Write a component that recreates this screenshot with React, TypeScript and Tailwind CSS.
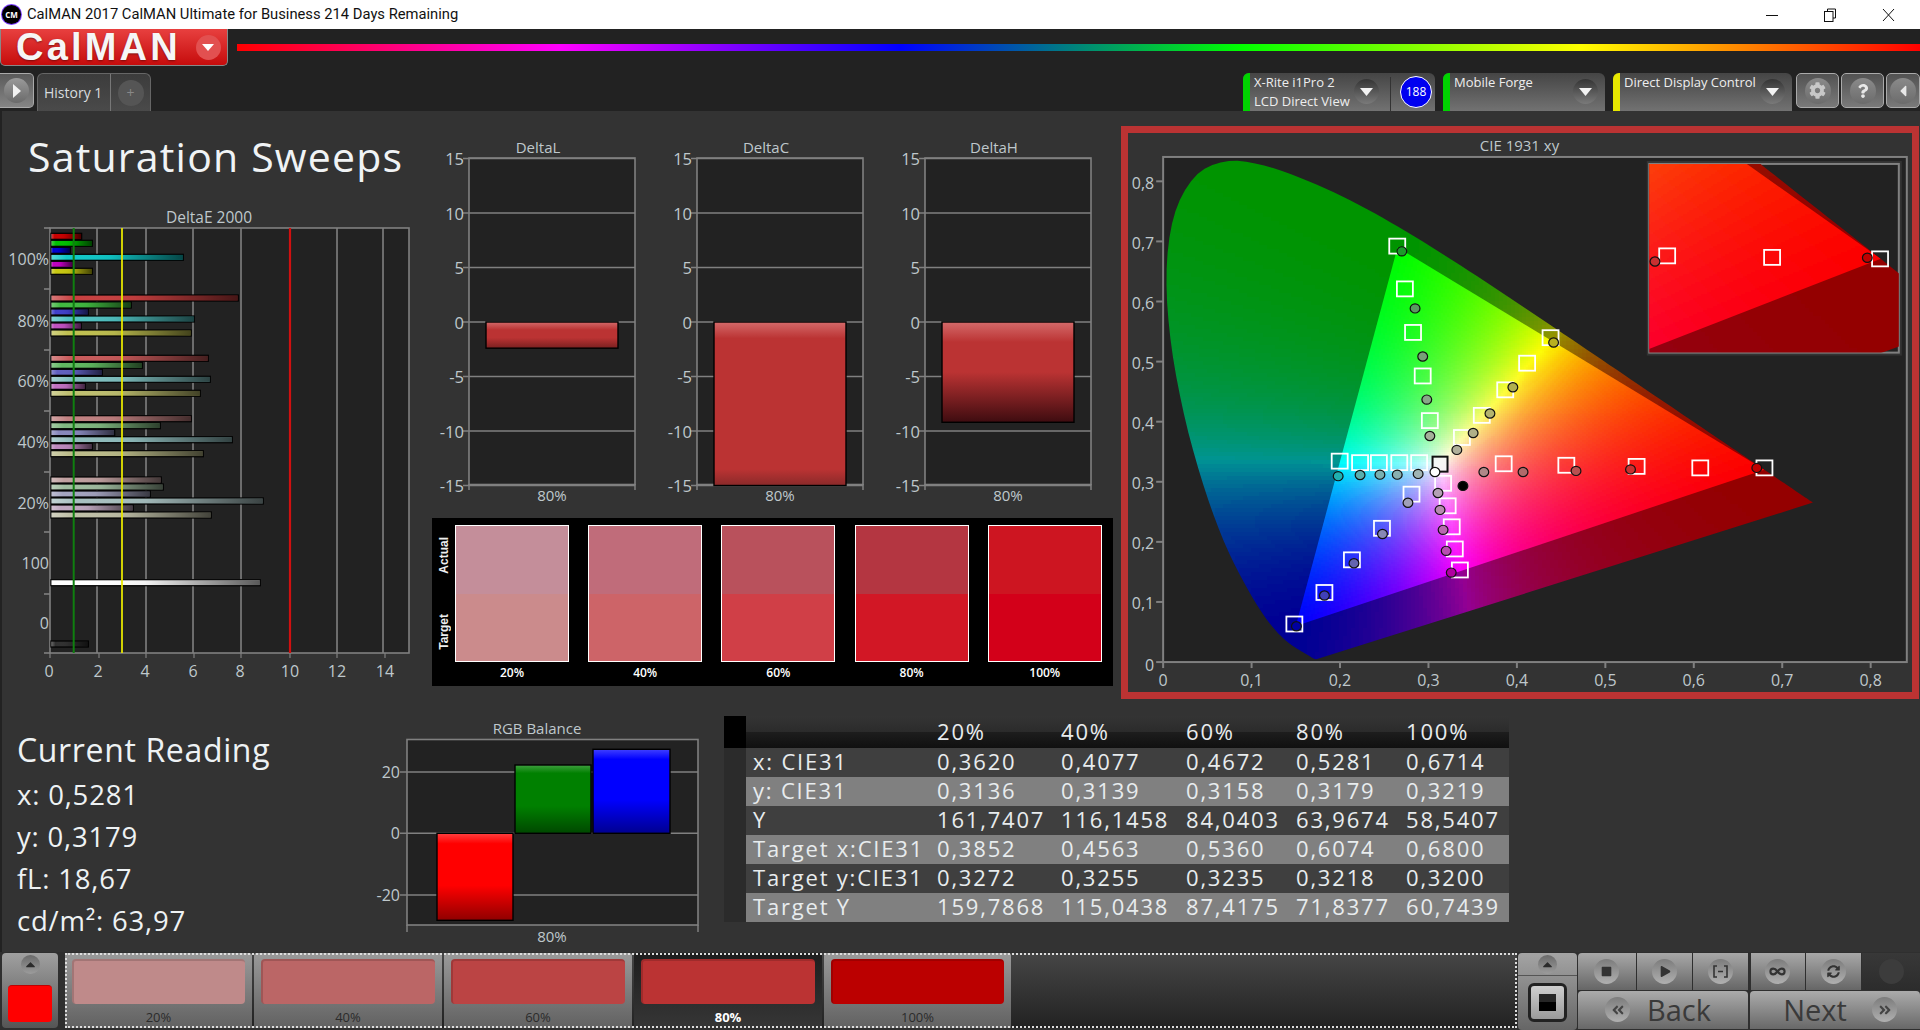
import { useMemo } from "react";
import { FaAngleDoubleLeft, FaAngleDoubleRight, FaCaretLeft, FaCaretUp, FaCog, FaPlay, FaQuestion, FaStop, FaSyncAlt } from "react-icons/fa";
import { LuInfinity } from "react-icons/lu";

// CIE 1931 spectral locus, 380nm to 700nm
const LOCUS: [number, number][] = [
  [0.1741, 0.005], [0.174, 0.005], [0.1738, 0.0049], [0.1736, 0.0049], [0.1733, 0.0048], [0.173, 0.0048],
  [0.1726, 0.0048], [0.1721, 0.0048], [0.1714, 0.0051], [0.1703, 0.0058], [0.1689, 0.0069], [0.1669, 0.0086],
  [0.1644, 0.0109], [0.1611, 0.0138], [0.1566, 0.0177], [0.151, 0.0227], [0.144, 0.0297], [0.1355, 0.0399],
  [0.1241, 0.0578], [0.1096, 0.0868], [0.0913, 0.1327], [0.0687, 0.2007], [0.0454, 0.295], [0.0235, 0.4127],
  [0.0082, 0.5384], [0.0039, 0.6548], [0.0139, 0.7502], [0.0389, 0.812], [0.0743, 0.8338], [0.1142, 0.8262],
  [0.1547, 0.8059], [0.1929, 0.7816], [0.2296, 0.7543], [0.2658, 0.7243], [0.3016, 0.6923], [0.3373, 0.6589],
  [0.3731, 0.6245], [0.4087, 0.5896], [0.4441, 0.5547], [0.4788, 0.5202], [0.5125, 0.4866], [0.5448, 0.4544],
  [0.5752, 0.4242], [0.6029, 0.3965], [0.627, 0.3725], [0.6482, 0.3514], [0.6658, 0.334], [0.6801, 0.3197],
  [0.6915, 0.3083], [0.7006, 0.2993], [0.7079, 0.292], [0.714, 0.2859], [0.7219, 0.278], [0.726, 0.274], [0.7347, 0.2653],
];
const P3: [number, number][] = [[0.68, 0.32], [0.265, 0.69], [0.15, 0.06]];

// catmull-rom through the 5nm samples, the raw polygon shows kinks at this size
const LOCUS_SMOOTH: [number, number][] = LOCUS.flatMap((p1, i) => {
  const n = LOCUS.length - 1;
  const p0 = LOCUS[Math.max(i - 1, 0)];
  const p2 = LOCUS[Math.min(i + 1, n)];
  const p3 = LOCUS[Math.min(i + 2, n)];
  return [0, 0.25, 0.5, 0.75].map((t): [number, number] => {
    const f = (a: number, b: number, c: number, d: number) =>
      0.5 * (2 * b + (c - a) * t + (2 * a - 5 * b + 4 * c - d) * t * t + (3 * b - a - 3 * c + d) * t * t * t);
    return [f(p0[0], p1[0], p2[0], p3[0]), f(p0[1], p1[1], p2[1], p3[1])];
  });
});

function toRgb(x: number, y: number) {
  const X = x / y;
  const Z = (1 - x - y) / y;
  return [
    2.4935 * X - 0.9314 - 0.4027 * Z,
    -0.8295 * X + 1.7627 + 0.0236 * Z,
    0.0358 * X - 0.0762 + 0.9569 * Z,
  ];
}

function shade(rgb: number[], k: number, curve: number) {
  const c = rgb.map((v) => Math.max(v, 0));
  const m = Math.max(...c, 0.0001);
  const [r, g, b] = c.map((v) => Math.round(Math.pow(v / m, curve) * k * 255) & ~3);
  return `rgb(${r},${g},${b})`;
}

type View = { w: number; h: number; x0: number; y0: number; sx: number; sy: number };

function buildMesh(v: View, step: number, inner: boolean) {
  const byColor = new Map<string, string[]>();
  for (let row = 0; row < v.h; row += step) {
    for (let col = 0; col < v.w; col += step) {
      const x = v.x0 + (col + step / 2) / v.sx;
      const y = v.y0 - (row + step / 2) / v.sy;
      if (y < 0.002) continue;
      const rgb = toRgb(x, y);
      if (inner && Math.min(...rgb) < -0.12) continue;
      const color = inner ? shade(rgb, 1, 1.15) : shade(rgb, 0.58, 1.4);
      const list = byColor.get(color) ?? [];
      list.push(`M${col} ${row}h${step}v${step}h-${step}z`);
      byColor.set(color, list);
    }
  }
  return [...byColor.entries()].map(([color, d]) => ({ color, d: d.join("") }));
}

function Gamut({ id, view, outerStep, innerStep }: { id: string; view: View; outerStep: number; innerStep: number }) {
  const outer = useMemo(() => buildMesh(view, outerStep, false), [view, outerStep]);
  const inner = useMemo(() => buildMesh(view, innerStep, true), [view, innerStep]);
  const pts = (list: [number, number][]) =>
    list.map(([x, y]) => `${(x - view.x0) * view.sx},${(view.y0 - y) * view.sy}`).join(" ");
  return (
    <>
      <defs>
        <clipPath id={`${id}-locus`}>
          <polygon points={pts([...LOCUS_SMOOTH, LOCUS[LOCUS.length - 1]])} />
        </clipPath>
        <clipPath id={`${id}-tri`}>
          <polygon points={pts(P3)} />
        </clipPath>
      </defs>
      <g clipPath={`url(#${id}-locus)`}>
        {outer.map((p) => (
          <path key={p.color} d={p.d} fill={p.color} shapeRendering="crispEdges" />
        ))}
        <g clipPath={`url(#${id}-tri)`}>
          {inner.map((p) => (
            <path key={p.color} d={p.d} fill={p.color} shapeRendering="crispEdges" />
          ))}
        </g>
      </g>
    </>
  );
}

const MAIN_VIEW: View = { w: 745, h: 506, x0: 0, y0: 0.8405, sx: 886, sy: 602 };
const INSET_VIEW: View = { w: 250, h: 189, x0: 0.524, y0: 0.4005, sx: 1487, sy: 1180 };

// marker places read off the reference, in crop units
const fx = (n: number) => 1120 + n / 1.96;
const fy = (n: number) => 120 + n / 2.66;

const SQUARES: [number, number][] = [
  [542, 336], [557, 450], [573, 566], [592, 682], [606, 801],
  [843, 580], [797, 648], [754, 719], [708, 787], [669, 846],
  [429, 909], [469, 913], [506, 913], [546, 913], [585, 913],
  [1263, 927], [1137, 927], [1012, 923], [874, 920], [751, 916],
  [340, 1343], [399, 1259], [453, 1172], [512, 1088], [570, 997],
  [665, 1199], [655, 1143], [649, 1084], [641, 1028], [632, 968],
];
const DOTS: [number, number, string][] = [
  [1248, 927, "#c00000"], [1000, 931, "#c83030"], [893, 935, "#b85050"], [789, 938, "#b06a6a"], [712, 938, "#b08888"],
  [551, 350, "#1c9a2a"], [577, 502, "#5a9a60"], [592, 630, "#78a078"], [600, 745, "#88a888"], [606, 842, "#a4b09a"],
  [344, 1349, "#0000a0"], [399, 1267, "#4040b8"], [457, 1181, "#6464b0"], [513, 1103, "#8888b4"], [563, 1020, "#a0a0b8"],
  [849, 593, "#b8b020"], [769, 712, "#b0b050"], [724, 782, "#b4b46e"], [691, 834, "#b0b088"], [659, 879, "#b0b09a"],
  [426, 949, "#20b0b0"], [469, 946, "#58aeae"], [508, 945, "#78b0b0"], [542, 945, "#88b0b0"], [583, 943, "#a0b4b4"],
  [648, 1206, "#b000a0"], [638, 1148, "#b84eb0"], [632, 1092, "#b868b0"], [626, 1039, "#b88ab0"], [622, 994, "#b4a0b4"],
  [616, 938, "#ffffff"], [671, 975, "#000000"],
];
const INSET_SQUARES: [number, number][] = [[1490, 370], [1278, 366], [1072, 362]];
const INSET_DOTS: [number, number, string][] = [[1465, 367, "#c00000"], [1048, 377, "#c83030"]];

function Square({ x, y, stroke = "#fff" }: { x: number; y: number; stroke?: string }) {
  return <rect x={x - 8} y={y - 7.5} width={16} height={15} fill="none" stroke={stroke} strokeWidth={1.8} />;
}

function Dot({ x, y, fill }: { x: number; y: number; fill: string }) {
  return <ellipse cx={x} cy={y} rx={4.9} ry={4.6} fill={fill} stroke="#111" strokeWidth={1.2} />;
}

function Label({ x, y, anchor = "middle", children, size = 16 }: { x: number; y: number; anchor?: "start" | "middle" | "end"; children: React.ReactNode; size?: number }) {
  return (
    <text x={x} y={y} textAnchor={anchor} dominantBaseline="central" fill="#bfc8cc" fontSize={size}>
      {children}
    </text>
  );
}

function CieChart() {
  const xs = ["0", "0,1", "0,2", "0,3", "0,4", "0,5", "0,6", "0,7", "0,8"];
  const ys = ["0", "0,1", "0,2", "0,3", "0,4", "0,5", "0,6", "0,7", "0,8"];
  return (
    <svg viewBox="1128 133 783 560" className="block w-[784px] h-[559px]">
      <Label x={1519} y={145} size={15}>CIE 1931 xy</Label>
      <rect x={1162} y={157} width={745} height={506} fill="#222" stroke="#808080" strokeWidth={2} />
      <svg x={1162} y={157} width={745} height={506} viewBox="0 0 745 506">
        <Gamut id="main" view={MAIN_VIEW} outerStep={4} innerStep={2} />
      </svg>
      {xs.map((t, i) => (
        <g key={t}>
          <line x1={1162 + i * 88.6} x2={1162 + i * 88.6} y1={663} y2={669} stroke="#808080" strokeWidth={2} />
          <Label x={1162 + i * 88.6} y={680.5}>{t}</Label>
        </g>
      ))}
      {ys.map((t, i) => (
        <g key={t}>
          <line x1={1155} x2={1162} y1={663 - i * 60.2} y2={663 - i * 60.2} stroke="#808080" strokeWidth={2} />
          <Label x={1153} y={i === 0 ? 665.5 : 664.5 - i * 60.2} anchor="end">{t}</Label>
        </g>
      ))}
      <rect x={1646.5} y={161} width={255.5} height={195} fill="#333" />
      <rect x={1649} y={164} width={250} height={189} fill="#222" stroke="#808080" strokeWidth={2} />
      <svg x={1649} y={164} width={250} height={189} viewBox="0 0 250 189">
        <Gamut id="inset" view={INSET_VIEW} outerStep={4} innerStep={2} />
      </svg>
      {SQUARES.map(([x, y]) => (
        <Square key={`${x}-${y}`} x={fx(x)} y={fy(y)} />
      ))}
      <rect x={fx(626) - 7.5} y={fy(917) - 7.5} width={15} height={15} fill="#f4f4f4" fillOpacity={0.85} stroke="#111" strokeWidth={2} />
      {DOTS.map(([x, y, c]) => (
        <Dot key={`${x}-${y}`} x={fx(x)} y={fy(y)} fill={c} />
      ))}
      {INSET_SQUARES.map(([x, y]) => (
        <Square key={`${x}-${y}`} x={fx(x)} y={fy(y)} />
      ))}
      {INSET_DOTS.map(([x, y, c]) => (
        <Dot key={`${x}-${y}`} x={fx(x)} y={fy(y)} fill={c} />
      ))}
    </svg>
  );
}

const DE_ROWS = [
  { y: 236.3, ends: [245, 277, 211, 550, 219, 277], colors: ["#c80000", "#00c000", "#0000d0", "#10c8c8", "#c000c0", "#c8c810"] },
  { y: 298, ends: [715, 394, 265, 583, 244, 574], colors: ["#c84040", "#40b840", "#4040c8", "#50c0c0", "#c050c0", "#c0c050"] },
  { y: 358.3, ends: [625, 427, 307, 631, 256, 601], colors: ["#c85a5a", "#60b860", "#6060c0", "#80c0c0", "#c070c0", "#c0c070"] },
  { y: 418.7, ends: [574, 481, 344, 697, 277, 610], colors: ["#c08080", "#80b880", "#8888bc", "#90bcbc", "#bc88bc", "#bcbc8a"] },
  { y: 480, ends: [484, 490, 451, 790, 400, 634], colors: ["#c0a0a0", "#a0bca0", "#a4a4c0", "#a8c0c0", "#c0a8c0", "#c0c0a8"] },
];

function DeltaEBar({ y, end, color }: { y: number; end: number; color: string }) {
  return (
    <g>
      <rect x={51} y={y - 3} width={end / 3 - 51} height={6} fill={color} stroke="#000" strokeWidth={1.2} />
      <rect x={51} y={y - 2.4} width={end / 3 - 51.5} height={4.8} fill="url(#de-fade)" />
    </g>
  );
}

function DeltaEChart() {
  const grid = [97, 146, 193, 241, 337, 383];
  const ticks = [228, 289, 350, 411, 472, 532, 594, 653];
  const labels: [string, number][] = [["100%", 258.7], ["80%", 320.7], ["60%", 381], ["40%", 441.7], ["20%", 502.7], ["100", 563], ["0", 623]];
  const xLabels: [string, number][] = [["0", 49], ["2", 98], ["4", 145], ["6", 193], ["8", 240], ["10", 289], ["12", 336], ["14", 384]];
  return (
    <svg viewBox="2 205 430 485" className="block w-[430px] h-[485px]">
      <defs>
        <linearGradient id="de-fade">
          <stop offset="0" stopColor="#fff" stopOpacity={0.3} />
          <stop offset="0.12" stopColor="#fff" stopOpacity={0} />
          <stop offset="0.45" stopColor="#000" stopOpacity={0.05} />
          <stop offset="1" stopColor="#000" stopOpacity={0.65} />
        </linearGradient>
      </defs>
      <Label x={209} y={217} size={15.5}>DeltaE 2000</Label>
      <rect x={50} y={228} width={359} height={425} fill="#222" stroke="#808080" strokeWidth={1.6} />
      {grid.map((x) => (
        <line key={x} x1={x} x2={x} y1={228} y2={653} stroke="#808080" strokeWidth={1.6} />
      ))}
      {ticks.map((y) => (
        <line key={y} x1={44} x2={50} y1={y} y2={y} stroke="#808080" strokeWidth={1.6} />
      ))}
      {DE_ROWS.map((row) =>
        row.ends.map((end, i) => <DeltaEBar key={`${row.y}-${i}`} y={row.y + i * 7} end={end} color={row.colors[i]} />),
      )}
      <DeltaEBar y={582.7} end={781} color="#ffffff" />
      <DeltaEBar y={644} end={265} color="#303030" />
      <line x1={73.7} x2={73.7} y1={228} y2={653} stroke="#0f7f0f" strokeWidth={2} />
      <line x1={122} x2={122} y1={228} y2={653} stroke="#e6e600" strokeWidth={1.8} />
      <line x1={290} x2={290} y1={228} y2={653} stroke="#d01010" strokeWidth={2.2} />
      {labels.map(([t, y]) => (
        <Label key={t + y} x={49} y={y} anchor="end">{t}</Label>
      ))}
      {xLabels.map(([t, x]) => (
        <g key={t}>
          <line x1={x + 1} x2={x + 1} y1={653} y2={658} stroke="#808080" strokeWidth={1.2} />
          <Label x={x + (t.length > 1 ? 1 : 0)} y={671}>{t}</Label>
        </g>
      ))}
    </svg>
  );
}

function DeltaChart({ title, value, stops, id }: { title: string; value: number; stops: [number, string][]; id: string }) {
  const ticks = [15, 10, 5, 0, -5, -10, -15];
  const yOf = (v: number) => 322 - v * 10.9;
  return (
    <svg viewBox="0 135 228 372" className="block w-[228px] h-[372px]">
      <defs>
        <linearGradient id={id} x1="0" x2="0" y1="0" y2="1">
          {stops.map(([o, c]) => (
            <stop key={o} offset={o} stopColor={c} />
          ))}
        </linearGradient>
      </defs>
      <Label x={106} y={147} size={15}>{title}</Label>
      <rect x={37} y={158} width={166} height={326.5} fill="#222" stroke="#808080" strokeWidth={1.6} />
      {ticks.map((t) => (
        <g key={t}>
          <line x1={31} x2={203} y1={yOf(t)} y2={yOf(t)} stroke="#808080" strokeWidth={1.5} />
          <Label x={32} y={yOf(t)} anchor="end" size={16.5}>{t}</Label>
        </g>
      ))}
      <rect x={54} y={322} width={132} height={yOf(value) - 322} fill={`url(#${id})`} stroke="#000" strokeWidth={1.4} />
      <line x1={37} x2={37} y1={484} y2={490} stroke="#808080" strokeWidth={1.5} />
      <line x1={203} x2={203} y1={484} y2={490} stroke="#808080" strokeWidth={1.5} />
      <Label x={120} y={495} size={15}>80%</Label>
    </svg>
  );
}

function RgbBalance() {
  const bars = [
    { x: 437, w: 76, y: 833.3, h: 87, id: "bal-r", c: ["#ff4040", "#ff0000", "#ff0000", "#900000"] },
    { x: 515, w: 76, y: 765, h: 68.3, id: "bal-g", c: ["#40a040", "#008000", "#008000", "#004800"] },
    { x: 593, w: 77, y: 749.3, h: 84, id: "bal-b", c: ["#4040ff", "#0000ff", "#0000ff", "#000090"] },
  ];
  return (
    <svg viewBox="340 716 384 230" className="block w-[384px] h-[230px]">
      <defs>
        {bars.map((b) => (
          <linearGradient key={b.id} id={b.id} x1="0" x2="0" y1="0" y2="1">
            <stop offset="0" stopColor={b.c[0]} />
            <stop offset="0.12" stopColor={b.c[1]} />
            <stop offset="0.6" stopColor={b.c[2]} />
            <stop offset="1" stopColor={b.c[3]} />
          </linearGradient>
        ))}
      </defs>
      <Label x={537} y={728} size={15}>RGB Balance</Label>
      <rect x={407} y={739.5} width={291} height={185.5} fill="#222" stroke="#808080" strokeWidth={1.6} />
      {[772, 833.3, 895].map((y, i) => (
        <g key={y}>
          <line x1={400} x2={698} y1={y} y2={y} stroke="#808080" strokeWidth={1.5} />
          <Label x={400} y={y} anchor="end" size={16}>{["20", "0", "-20"][i]}</Label>
        </g>
      ))}
      {bars.map((b) => (
        <rect key={b.id} x={b.x} y={b.y} width={b.w} height={b.h} fill={`url(#${b.id})`} stroke="#000" strokeWidth={1.4} />
      ))}
      <line x1={407} x2={407} y1={925} y2={932} stroke="#808080" strokeWidth={1.5} />
      <line x1={698} x2={698} y1={925} y2={932} stroke="#808080" strokeWidth={1.5} />
      <Label x={552} y={936} size={15}>80%</Label>
    </svg>
  );
}

const SWATCHES = [
  { label: "20%", actual: "bg-[#c48e9a]", target: "bg-[#cb8b8c]" },
  { label: "40%", actual: "bg-[#c06c7a]", target: "bg-[#cd6468]" },
  { label: "60%", actual: "bg-[#b9515c]", target: "bg-[#d03f47]" },
  { label: "80%", actual: "bg-[#b43641]", target: "bg-[#d21725]" },
  { label: "100%", actual: "bg-[#cd1521]", target: "bg-[#d30019]" },
];

function Swatches() {
  return (
    <div className="mt-[11px] flex h-[168px] w-[681px] bg-black pt-[7px]">
      <div className="flex w-[23px] h-[137px] flex-col text-[12px] font-bold text-[#eee] [font-family:'Liberation_Sans',sans-serif]">
        <div className="flex h-1/2 items-center justify-center pb-[8px]">
          <span className="[writing-mode:vertical-rl] rotate-180">Actual</span>
        </div>
        <div className="flex h-1/2 items-center justify-center pt-[8px]">
          <span className="[writing-mode:vertical-rl] rotate-180">Target</span>
        </div>
      </div>
      <div className="flex gap-[19.2px]">
        {SWATCHES.map((s) => (
          <div key={s.label} className="w-[114px]">
            <div className="flex h-[137px] flex-col border border-white">
              <div className={`flex-1 ${s.actual}`} />
              <div className={`flex-1 ${s.target}`} />
            </div>
            <p className="mt-[3px] text-center text-[12px] font-semibold leading-[16px] text-white">{s.label}</p>
          </div>
        ))}
      </div>
    </div>
  );
}

const TABLE_ROWS = [
  ["x: CIE31", "0,3620", "0,4077", "0,4672", "0,5281", "0,6714"],
  ["y: CIE31", "0,3136", "0,3139", "0,3158", "0,3179", "0,3219"],
  ["Y", "161,7407", "116,1458", "84,0403", "63,9674", "58,5407"],
  ["Target x:CIE31", "0,3852", "0,4563", "0,5360", "0,6074", "0,6800"],
  ["Target y:CIE31", "0,3272", "0,3255", "0,3235", "0,3218", "0,3200"],
  ["Target Y", "159,7868", "115,0438", "87,4175", "71,8377", "60,7439"],
];

function ReadingsTable() {
  const cols = "grid grid-cols-[22px_191px_124px_125px_110px_110px_103px] items-center";
  return (
    <div className="mt-[16px] w-[785px] text-[22px] leading-[26px] tracking-[1.8px] text-[#e8ecee]">
      <div className={`${cols} h-[32px] bg-[linear-gradient(#343434_0%,#2b2b2b_50%,#1d1d1d_50%,#101010_100%)]`}>
        <div className="h-full bg-black" />
        <div />
        {["20%", "40%", "60%", "80%", "100%"].map((h) => (
          <div key={h} className="-mt-[2px]">{h}</div>
        ))}
      </div>
      {TABLE_ROWS.map((row, i) => (
        <div key={row[0]} className={`${cols} h-[29px] ${i % 2 === 0 ? "bg-[#3f3f3f]" : "bg-[#808080]"}`}>
          <div className="h-full bg-[#2b2b2b]" />
          <div className="-mt-[4px] pl-[7px] whitespace-nowrap">{row[0]}</div>
          {row.slice(1).map((v, j) => (
            <div key={j} className="-mt-[4px] whitespace-nowrap">{v}</div>
          ))}
        </div>
      ))}
    </div>
  );
}

function CurrentReading() {
  const rows = ["x: 0,5281", "y: 0,3179", "fL: 18,67", "cd/m²: 63,97"];
  return (
    <div className="w-[340px] pl-[17px] pt-[33px] text-[#eef2f4]">
      <h2 className="h-[34px] text-[32px] leading-[34px] tracking-[0.65px] font-normal whitespace-nowrap">Current Reading</h2>
      <div className="mt-[7px]">
        {rows.map((r) => (
          <p key={r} className="h-[42px] text-[27.5px] leading-[42px] tracking-[0.8px]">{r}</p>
        ))}
      </div>
    </div>
  );
}

function DownCircle({ className = "" }: { className?: string }) {
  return (
    <div className={`flex h-[25px] w-[25px] items-center justify-center rounded-full bg-[linear-gradient(#343434,#7a7a7a)] ${className}`}>
      <svg width="13" height="8" viewBox="0 0 13 8"><path d="M0 0h13L6.5 8z" fill="#f2f2f2" /></svg>
    </div>
  );
}

function DeviceBox({ stripe, width, lines, circleRight }: { stripe: string; width: string; lines: string[]; circleRight: string }) {
  return (
    <div className={`relative flex h-[38px] ${width} overflow-hidden rounded-t-[6px] bg-[linear-gradient(#454545,#727272)]`}>
      <div className={`w-[7px] ${stripe}`} />
      <div className="pl-[4px] text-[13px] leading-[19px] text-[#eee] whitespace-nowrap">
        {lines.map((l) => (
          <div key={l}>{l}</div>
        ))}
      </div>
      <DownCircle className={`absolute top-[6px] ${circleRight}`} />
    </div>
  );
}

function SquareBtn({ children, width = "w-[43px]" }: { children: React.ReactNode; width?: string }) {
  return (
    <div className={`flex h-[35px] ${width} items-center justify-center rounded-[5px] border border-[#aaa] bg-[linear-gradient(#525252,#7a7a7a)]`}>
      <div className="flex h-[26px] w-[26px] items-center justify-center rounded-full bg-[linear-gradient(#8a8a8a,#6c6c6c)] text-[#c8c8c8]">
        {children}
      </div>
    </div>
  );
}

function Header() {
  return (
    <header className="h-[82px] bg-[#222]">
      <div className="flex h-[37px] items-center">
        <div className="flex h-[37px] w-[228px] items-center rounded-b-[5px] border-b border-x border-[#888] bg-[linear-gradient(#e8403f,#c60c0c)] pl-[15px]">
          <span className="text-[38px] font-bold leading-none tracking-[3.2px] text-[#f6f6f6] [font-family:'Liberation_Sans',sans-serif] [text-shadow:0_1px_2px_#00000066]">
            CalMAN
          </span>
          <div className="ml-[15px] flex h-[25px] w-[25px] items-center justify-center rounded-full bg-[#e25050]">
            <svg width="12" height="7" viewBox="0 0 12 7"><path d="M0 0h12L6 7z" fill="#fff" /></svg>
          </div>
        </div>
        <div className="ml-[9px] h-[7px] flex-1 bg-[linear-gradient(90deg,#f00_0px,#f0f_323px,#00f_663px,#0f0_1003px,#ff0_1344px,#f00_1683px)]" />
      </div>
      <div className="mt-[7px] flex h-[38px] items-start">
        <div className="flex h-[35px] w-[34px] items-center justify-center rounded-r-[5px] border border-l-0 border-[#aaa] bg-[linear-gradient(#5a5a5a,#858585)]">
          <div className="flex h-[25px] w-[25px] items-center justify-center rounded-full bg-[linear-gradient(#9a9a9a,#6a6a6a)]">
            <svg width="9" height="14" viewBox="0 0 9 14"><path d="M1 0l8 7-8 7z" fill="#f2f2f2" /></svg>
          </div>
        </div>
        <div className="ml-[3px] flex h-[38px] w-[114px] rounded-t-[6px] border-x border-t border-[#666] bg-[linear-gradient(#3c3c3c,#4a4a4a)]">
          <div className="flex w-[72px] items-center pl-[6px] text-[14px] text-[#d8dcdf] whitespace-nowrap">History 1</div>
          <div className="flex flex-1 items-center justify-center border-l border-[#777]">
            <div className="flex h-[26px] w-[26px] items-center justify-center rounded-full bg-[#555] text-[14px] text-[#888]">+</div>
          </div>
        </div>
        <div className="ml-auto flex items-start gap-[8px]">
          <div className="relative">
            <DeviceBox stripe="bg-[#00d400]" width="w-[192px]" lines={["X-Rite i1Pro 2", "LCD Direct View"]} circleRight="right-[56px]" />
            <div className="absolute right-[44px] top-[4px] h-[34px] w-px bg-[#333]" />
            <div className="absolute right-[3px] top-[3px] flex h-[32px] w-[32px] items-center justify-center rounded-full border border-white bg-[#0000f0] text-[12px] text-white">188</div>
          </div>
          <DeviceBox stripe="bg-[#00d400]" width="w-[162px]" lines={["Mobile Forge"]} circleRight="right-[7px]" />
          <DeviceBox stripe="bg-[#e8e800]" width="w-[179px]" lines={["Direct Display Control"]} circleRight="right-[7px]" />
          <div className="-ml-[4px] flex gap-[2px]">
            <SquareBtn><FaCog size={17} /></SquareBtn>
            <SquareBtn><FaQuestion size={14} className="text-[#e8e8e8]" /></SquareBtn>
            <SquareBtn width="w-[34px]"><FaCaretLeft size={18} className="text-[#e8e8e8]" /></SquareBtn>
          </div>
        </div>
      </div>
    </header>
  );
}

function TitleBar() {
  return (
    <div className="flex h-[29px] items-center bg-white text-[14.75px] text-[#111]">
      <div className="ml-[2px] flex h-[19px] w-[19px] items-center justify-center rounded-full bg-black text-[8px] font-bold text-white ring-1 ring-[#7a3cff]">CM</div>
      <span className="ml-[6px] [font-family:Roboto,sans-serif] whitespace-nowrap">CalMAN 2017 CalMAN Ultimate for Business 214 Days Remaining</span>
      <div className="ml-auto flex pr-[3px]">
        <div className="flex h-[29px] w-[58px] items-center justify-center">
          <svg width="12" height="12" viewBox="0 0 12 12"><path d="M0 6.5h12" stroke="#111" /></svg>
        </div>
        <div className="flex h-[29px] w-[58px] items-center justify-center">
          <svg width="12" height="14" viewBox="0 0 12 14" fill="none" stroke="#111"><path d="M3.5 3V1h8v9h-2.5" /><rect x="0.5" y="3.5" width="8.5" height="10" /></svg>
        </div>
        <div className="flex h-[29px] w-[58px] items-center justify-center">
          <svg width="13" height="14" viewBox="0 0 13 14" stroke="#111"><path d="M1 1l11 12M12 1L1 13" /></svg>
        </div>
      </div>
    </div>
  );
}

const SWEEP = [
  { label: "20%", fill: "bg-[#bf8a8a]", width: "w-[187px]" },
  { label: "40%", fill: "bg-[#bb6666]", width: "w-[188px]" },
  { label: "60%", fill: "bg-[#bb4444]", width: "w-[188px]" },
  { label: "80%", fill: "bg-[#bb3333]", width: "w-[188px]", active: true },
  { label: "100%", fill: "bg-[#bb0000]", width: "w-[187px]" },
];

function UpCircle() {
  return (
    <div className="flex h-[19px] w-[19px] items-center justify-center rounded-full bg-[linear-gradient(#6a6a6a,#9c9c9c)] text-[#2b2b2b]">
      <FaCaretUp size={15} />
    </div>
  );
}

function ToolCircle({ children, dark }: { children?: React.ReactNode; dark?: boolean }) {
  return (
    <div className={`flex h-[25px] w-[25px] items-center justify-center rounded-full text-[#333] ${dark ? "bg-[#3c3c3c]" : "bg-[linear-gradient(#7c7c7c,#b0b0b0)]"}`}>
      {children}
    </div>
  );
}

function ToolButton({ width, children, dark }: { width: string; children?: React.ReactNode; dark?: boolean }) {
  return (
    <div className={`flex h-[37px] ${width} items-center justify-center ${dark ? "bg-[linear-gradient(#383838,#2c2c2c)]" : "bg-[linear-gradient(#a8a8a8,#666)]"} first:rounded-tl-[4px]`}>
      {children}
    </div>
  );
}

function BottomBar() {
  return (
    <footer className="flex h-[78px] bg-[#2f2f2f] pt-px">
      <div className="ml-[2px] flex h-[75px] w-[56px] flex-col items-center rounded-[4px] bg-[linear-gradient(#a0a0a0,#555)] pt-[2px]">
        <UpCircle />
        <div className="mt-[11px] h-[37px] w-[44px] rounded-[4px] border-t border-[#c00000] bg-[#ff0000]" />
      </div>
      <div className="ml-[7px] flex h-[75px] w-[1452px] gap-[2px] bg-[linear-gradient(#464646,#222)] outline-2 outline-dotted -outline-offset-2 outline-[#ddd]">
        {SWEEP.map((s) => (
          <div
            key={s.label}
            className={`flex ${s.width} flex-col rounded-t-[3px] px-[7px] pt-[6px] ${s.active ? "bg-[linear-gradient(#1e1e1e,#363636)]" : "bg-[linear-gradient(#9a9a9a,#616161)]"}`}
          >
            <div className={`h-[45px] rounded-[4px] border-l-2 border-t-2 border-black/15 ${s.fill}`} />
            <p className={`mt-[5px] text-center text-[13px] leading-[16px] ${s.active ? "font-bold text-white" : "font-medium text-[#2b2b2b]"}`}>{s.label}</p>
          </div>
        ))}
      </div>
      <div className="ml-[1px] flex h-[77px] w-[59px] flex-col items-center rounded-[4px] bg-[linear-gradient(#a4a4a4,#666)]">
        <div className="flex h-[22px] items-center justify-center"><UpCircle /></div>
        <div className="h-px w-full bg-[#555]" />
        <div className="mt-[7px] flex h-[39px] w-[39px] items-center justify-center rounded-[6px] border-[3px] border-[#222] bg-[linear-gradient(#cfcfcf,#9a9a9a)]">
          <div className="h-[17px] w-[17px] bg-[linear-gradient(#262626_50%,#000_50%)]" />
        </div>
      </div>
      <div className="ml-[1px] flex w-[342px] flex-col gap-px">
        <div className="flex gap-px">
          <ToolButton width="w-[58px]"><ToolCircle><FaStop size={11} /></ToolCircle></ToolButton>
          <ToolButton width="w-[55px]"><ToolCircle><FaPlay size={11} className="ml-[2px]" /></ToolCircle></ToolButton>
          <ToolButton width="w-[55px]">
            <ToolCircle>
              <svg width="15" height="13" viewBox="0 0 15 13" fill="none" stroke="#333" strokeWidth="1.6"><path d="M4 1H1v11h3M11 1h3v11h-3M5 6.5h5" /></svg>
            </ToolCircle>
          </ToolButton>
          <div className="w-px" />
          <ToolButton width="w-[55px]"><ToolCircle><LuInfinity size={17} strokeWidth={3} /></ToolCircle></ToolButton>
          <ToolButton width="w-[55px]"><ToolCircle><FaSyncAlt size={13} /></ToolCircle></ToolButton>
          <ToolButton width="w-[58px]" dark><ToolCircle dark /></ToolButton>
        </div>
        <div className="flex gap-[2px]">
          <div className="relative flex h-[38px] w-[170px] items-center justify-center rounded-t-[4px] bg-[linear-gradient(#ababab,#686868)] pl-[32px] text-[29px] font-medium text-[#3a3a3a]">
            <div className="absolute left-[27px] top-[6px]"><ToolCircle><FaAngleDoubleLeft size={14} className="text-[#444]" /></ToolCircle></div>
            Back
          </div>
          <div className="relative flex h-[38px] w-[170px] items-center justify-center rounded-t-[4px] bg-[linear-gradient(#ababab,#686868)] pr-[40px] text-[29px] font-medium text-[#3a3a3a]">
            Next
            <div className="absolute right-[23px] top-[6px]"><ToolCircle><FaAngleDoubleRight size={14} className="text-[#444]" /></ToolCircle></div>
          </div>
        </div>
      </div>
    </footer>
  );
}

const DELTA_L: [number, string][] = [[0, "#d46a6a"], [0.3, "#bb3333"], [0.6, "#bb3333"], [1, "#7a2020"]];
const DELTA_C: [number, string][] = [[0, "#d46a6a"], [0.1, "#bb3333"], [0.9, "#bb3333"], [1, "#8a2a2a"]];
const DELTA_H: [number, string][] = [[0, "#d46a6a"], [0.2, "#bb3333"], [0.5, "#bb3333"], [1, "#3e0c10"]];

export default function App() {
  return (
    <div className="flex h-[1030px] w-[1920px] flex-col overflow-hidden bg-[#333] [font-family:'Open_Sans',sans-serif]">
      <TitleBar />
      <Header />
      <main className="h-[841px] bg-[#333] shadow-[inset_2px_0_0_#222]">
        <div className="flex h-[589px]">
          <div className="w-[432px]">
            <h1 className="flex h-[94px] items-center pb-[2px] pl-[28px] text-[41px] font-normal tracking-[1.2px] text-[#f0f3f5] whitespace-nowrap">Saturation Sweeps</h1>
            <div className="pl-[2px]"><DeltaEChart /></div>
          </div>
          <div className="w-[689px] pt-[24px]">
            <div className="flex">
              <DeltaChart title="DeltaL" value={-2.4} stops={DELTA_L} id="delta-l" />
              <DeltaChart title="DeltaC" value={-15} stops={DELTA_C} id="delta-c" />
              <DeltaChart title="DeltaH" value={-9.2} stops={DELTA_H} id="delta-h" />
            </div>
            <Swatches />
          </div>
          <section className="mt-[15px] h-[573px] w-[798px] border-[7px] border-[#bb3333]">
            <CieChart />
          </section>
        </div>
        <div className="flex">
          <CurrentReading />
          <div className="mt-[16px]"><RgbBalance /></div>
          <ReadingsTable />
        </div>
      </main>
      <BottomBar />
    </div>
  );
}
